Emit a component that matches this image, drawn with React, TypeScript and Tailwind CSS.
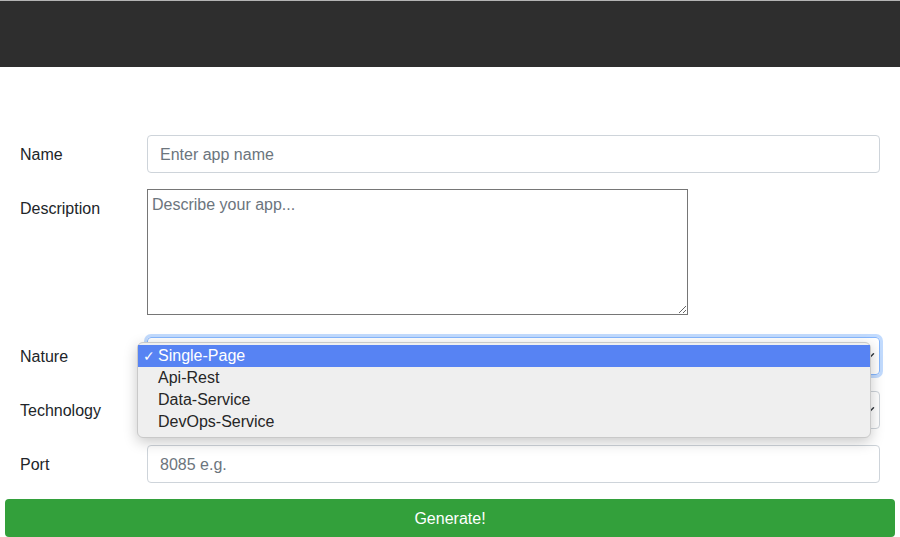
import { useState } from "react";

const FONT = { fontFamily: '"Liberation Sans", Arial, sans-serif' };

const NATURES = ["Single-Page", "Api-Rest", "Data-Service", "DevOps-Service"];

function Chevron() {
  return (
    <svg
      width="16"
      height="12"
      viewBox="0 0 16 16"
      className="pointer-events-none absolute right-[2px] top-1/2 -translate-y-1/2"
    >
      <path d="m2 5 6 6 6-6" fill="none" stroke="#343a40" strokeWidth="2" strokeLinecap="round" strokeLinejoin="round" />
    </svg>
  );
}

function Label({ children }: { children: string }) {
  return <label className="w-[127px] shrink-0 pt-[8px] text-[16px] leading-6 text-[#212529]">{children}</label>;
}

export default function App() {
  const [nature, setNature] = useState("Single-Page");

  return (
    <div className="min-h-[537px] bg-white" style={FONT}>
      {/* Header */}
      <div className="h-[67px] border-t border-[#b4b4b4] bg-[#2e2e2e]" />

      <form className="flex flex-col pt-[68px]" onSubmit={(e) => e.preventDefault()}>
        <div className="flex flex-col gap-4 pl-5 pr-5">
          {/* Name */}
          <div className="flex items-start">
            <Label>Name</Label>
            <input
              placeholder="Enter app name"
              className="h-[38px] flex-1 rounded-[4px] border border-[#ced4da] px-3 pt-[2px] text-[16px] text-[#212529] outline-none placeholder:text-[#6c757d]"
            />
          </div>

          {/* Description */}
          <div className="flex items-start pb-[6px]">
            <Label>Description</Label>
            <textarea
              placeholder="Describe your app..."
              className="h-[126px] w-[541px] border border-[#767676] px-[4px] pt-[4px] text-[16px] leading-[22px] text-[#212529] outline-none placeholder:text-[#6c757d]"
            />
          </div>

          {/* Nature */}
          <div className="relative flex items-start">
            <Label>Nature</Label>
            <div className="relative h-[38px] flex-1 rounded-[4px] border border-[#86b7fe] shadow-[0_0_0_3px_rgba(13,110,253,0.25)]">
              <Chevron />
            </div>

            {/* open dropdown */}
            <div className="absolute left-[117px] top-[5px] z-10 h-[96px] w-[734px] rounded-[6px] border border-[#c9c9c9] bg-[#efefef] pt-[2px] shadow-[0_4px_14px_rgba(0,0,0,0.22)]">
              {NATURES.map((n) => (
                <div
                  key={n}
                  onClick={() => setNature(n)}
                  className={
                    n === nature
                      ? "flex h-[22px] items-center bg-[#5783f3] text-[16px] text-white"
                      : "flex h-[22px] items-center text-[16px] text-[#262626]"
                  }
                >
                  <span className="w-[20px] pl-[5px] text-[14px]">{n === nature ? "✓" : ""}</span>
                  <span>{n}</span>
                </div>
              ))}
            </div>
          </div>

          {/* Technology */}
          <div className="flex items-start">
            <Label>Technology</Label>
            <div className="relative h-[38px] flex-1 rounded-[4px] border border-[#ced4da]">
              <Chevron />
            </div>
          </div>

          {/* Port */}
          <div className="flex items-start">
            <Label>Port</Label>
            <input
              placeholder="8085 e.g."
              className="h-[38px] flex-1 rounded-[4px] border border-[#ced4da] px-3 pt-[2px] text-[16px] text-[#212529] outline-none placeholder:text-[#6c757d]"
            />
          </div>
        </div>

        <div className="px-[5px] pt-4">
          <button type="submit" className="h-[38px] w-full rounded-[4px] bg-[#33a03b] pt-[2px] text-[16px] text-white">
            Generate!
          </button>
        </div>
      </form>
    </div>
  );
}
